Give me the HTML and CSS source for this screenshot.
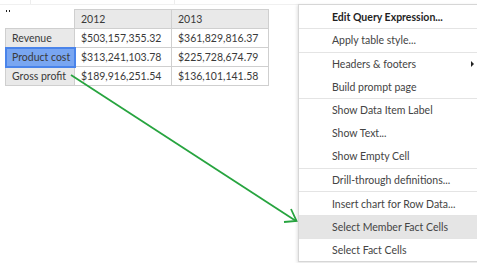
FILE: index.html
```html
<!DOCTYPE html>
<html lang="en">
<head>
  <meta charset="UTF-8">
  <title>Crosstab context menu</title>
  <link rel="stylesheet" href="styles.css">
</head>
<body>
  <div class="page">
    <div class="ghost-row">
      <span class="ghost-cell first"></span>
      <span class="ghost-cell"></span>
    </div>
    <span class="handle"><i></i><i></i></span>

    <table class="crosstab">
      <colgroup>
        <col class="c-head">
        <col class="c-val">
        <col class="c-val">
      </colgroup>
      <tr>
        <td class="corner"></td>
        <td class="col-head">2012</td>
        <td class="col-head">2013</td>
      </tr>
      <tr>
        <td class="row-head">Revenue</td>
        <td>$503,157,355.32</td>
        <td>$361,829,816.37</td>
      </tr>
      <tr>
        <td class="row-head selected">Product cost</td>
        <td>$313,241,103.78</td>
        <td>$225,728,674.79</td>
      </tr>
      <tr>
        <td class="row-head">Gross profit</td>
        <td>$189,916,251.54</td>
        <td>$136,101,141.58</td>
      </tr>
    </table>

    <!-- annotation arrow pointing at the menu item -->
    <svg class="arrow" width="477" height="263" viewBox="0 0 477 263">
      <line x1="71" y1="75" x2="296" y2="221" stroke="#27a43f" stroke-width="1.8"/>
      <polyline points="291,209 296.5,221 284,222" fill="none" stroke="#27a43f" stroke-width="1.8"/>
    </svg>

    <ul class="menu">
      <li class="item strong">Edit Query Expression...</li>
      <li class="item sep">Apply table style...</li>
      <li class="item sep">Headers &amp; footers<span class="sub"></span></li>
      <li class="item">Build prompt page</li>
      <li class="item sep">Show Data Item Label</li>
      <li class="item">Show Text...</li>
      <li class="item">Show Empty Cell</li>
      <li class="item sep">Drill-through definitions...</li>
      <li class="item sep">Insert chart for Row Data...</li>
      <li class="item sep hover">Select Member Fact Cells</li>
      <li class="item sep">Select Fact Cells</li>
    </ul>
  </div>
</body>
</html>
```

FILE: styles.css
```css
body {
  margin: 0;
  overflow: hidden;
  background: #fff;
  font-family: Lato, "Noto Sans", sans-serif;
  color: #3a3a3a;
}
.page {
  position: relative;
  width: 477px;
  height: 263px;
  overflow: hidden;
}
.ghost-row {
  display: flex;
  height: 4px;
  border-bottom: 1px solid #f0f0f0;
}
.ghost-cell {
  width: 143px;
  border-right: 1px solid #ededed;
}
.ghost-cell.first {
  width: 30px;
}
.handle {
  position: absolute;
  left: 6px;
  top: 10px;
  display: flex;
  gap: 2px;
}
.handle i {
  width: 1px;
  height: 2px;
  background: #222;
}
.crosstab {
  border-collapse: collapse;
  table-layout: fixed;
  width: 263px;
  margin: 4px 0 0 5px;
  font-size: 10.5px;
}
.c-head {
  width: 69px;
}
.c-val {
  width: 97px;
}
.crosstab td {
  height: 18px;
  padding: 0 0 0 6px;
  border: 1px solid #cfcfcf;
  white-space: nowrap;
  overflow: hidden;
}
.crosstab td.corner {
  border: none;
  border-right: 1px solid #cfcfcf;
}
.col-head,
.row-head {
  background: #e9e9e9;
}
.row-head.selected {
  background: #79a6f1;
  outline: 2px solid #4a84ea;
  outline-offset: -1px;
  position: relative;
}
.arrow {
  position: absolute;
  left: 0;
  top: 0;
  pointer-events: none;
}
.menu {
  position: absolute;
  left: 298px;
  top: 4px;
  width: 200px;
  margin: 0;
  padding: 0;
  list-style: none;
  background: #fff;
  border: 1px solid #d6d6d6;
  box-shadow: -1px 1px 3px rgba(0, 0, 0, 0.12);
  font-size: 10.5px;
}
.item {
  box-sizing: border-box;
  display: flex;
  align-items: center;
  height: 23.3px;
  padding-left: 33px;
  color: #444;
  white-space: nowrap;
}
.item.sep {
  border-top: 1px solid #e4e4e4;
}
.item.strong {
  font-weight: 700;
  color: #1f1f1f;
}
.item.hover {
  background: #e5e5e5;
}
.sub {
  margin-left: auto;
  margin-right: 25px;
  width: 0;
  height: 0;
  border-top: 3px solid transparent;
  border-bottom: 3px solid transparent;
  border-left: 3px solid #222;
}
```
